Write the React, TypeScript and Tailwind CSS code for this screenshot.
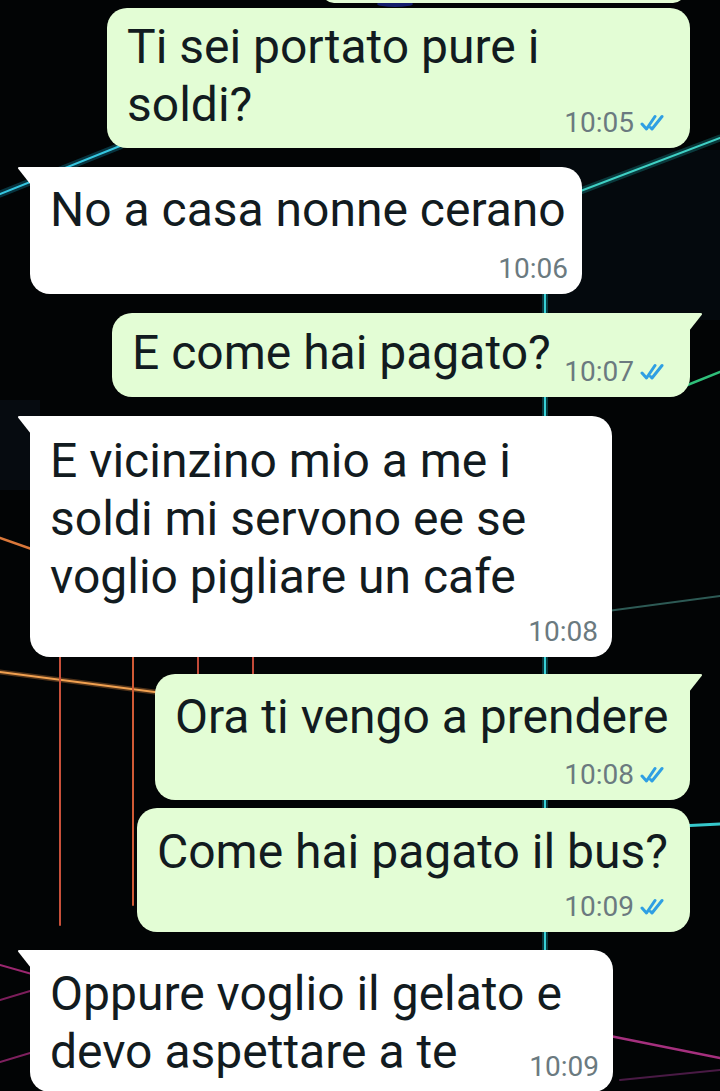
import type { ReactNode } from "react";

const font = { fontFamily: "Roboto, 'Noto Sans', Arial, sans-serif" };

function Ticks() {
  return (
    <svg width="24" height="18" viewBox="0 0 24 18" fill="none" className="shrink-0">
      <path d="M2 10 L6.5 15 L15 2.5" stroke="#2f9fe3" strokeWidth="3" strokeLinecap="round" strokeLinejoin="round" />
      <path d="M10.5 13.5 L12 15 L22 2.5" stroke="#2f9fe3" strokeWidth="3" strokeLinecap="round" strokeLinejoin="round" />
    </svg>
  );
}

function Time({ t, read }: { t: string; read?: boolean }) {
  return (
    <div className="flex shrink-0 items-center gap-[6px] text-[28px] leading-[28px] text-[#6b7a80]">
      <span>{t}</span>
      {read && <Ticks />}
    </div>
  );
}

function TailIn() {
  return (
    <svg width="14" height="18" viewBox="0 0 14 18" className="absolute -left-[13px] top-0">
      <path d="M14 0 H2.6 Q0 0 1.4 2 L14 18 Z" fill="#ffffff" />
    </svg>
  );
}

function TailOut() {
  return (
    <svg width="14" height="18" viewBox="0 0 14 18" className="absolute -right-[13px] top-0">
      <path d="M0 0 H11.4 Q14 0 12.6 2 L0 18 Z" fill="#e3fdd5" />
    </svg>
  );
}

type BubbleProps = {
  out?: boolean;
  tail?: boolean;
  inline?: boolean;
  className: string;
  lines: string[];
  time: string;
};

function Bubble({ out, tail, inline, className, lines, time }: BubbleProps) {
  const text: ReactNode = (
    <p className="whitespace-nowrap text-[48px] leading-[58px] text-[#121b20]">
      {lines.map((l, i) => (
        <span key={i} className="block">
          {l}
        </span>
      ))}
    </p>
  );
  return (
    <div
      className={`relative flex shrink-0 rounded-[20px] pb-[11px] pl-[20px] ${
        out ? "ml-auto mr-[30px] bg-[#e3fdd5] pr-[26px]" : "ml-[30px] bg-white pr-[14px]"
      } ${tail ? (out ? "rounded-tr-none" : "rounded-tl-none") : ""} ${
        inline ? "flex-row items-end justify-between" : "flex-col justify-between"
      } ${className}`}
    >
      {tail && (out ? <TailOut /> : <TailIn />)}
      <div className={inline ? "min-w-0 flex-1 self-start" : ""}>{text}</div>
      <div className="flex justify-end">
        <Time t={time} read={out} />
      </div>
    </div>
  );
}

function Wallpaper() {
  return (
    <svg className="absolute inset-0" width="720" height="1091" viewBox="0 0 720 1091">
      <rect width="720" height="1091" fill="#020405" />
      <rect x="540" y="150" width="180" height="170" fill="#04090d" />
      <rect x="0" y="400" width="40" height="90" fill="#060b10" />
      <g fill="none" strokeLinecap="round">
        <ellipse cx="395" cy="4" rx="18" ry="3" fill="#1b2a9a" opacity="0.7" />
        <path d="M0 194 L120 146" stroke="#17a3c4" strokeWidth="7" opacity="0.3" />
        <path d="M0 194 L120 146" stroke="#35c6e0" strokeWidth="2" />
        <path d="M570 195 L720 138" stroke="#1aa8a8" strokeWidth="7" opacity="0.3" />
        <path d="M570 195 L720 138" stroke="#3fd0c4" strokeWidth="2" />
        <path d="M545 290 L545 1091" stroke="#1bb5c0" strokeWidth="6" opacity="0.3" />
        <path d="M545 290 L545 1091" stroke="#38d0d6" strokeWidth="2" />
        <path d="M680 388 L720 372" stroke="#2fbf7a" strokeWidth="2.5" />
        <path d="M600 612 L720 596" stroke="#2d5a55" strokeWidth="2" />
        <path d="M0 538 L40 552" stroke="#d9773a" strokeWidth="2.5" />
        <path d="M0 672 L170 694" stroke="#e08a40" strokeWidth="5" opacity="0.35" />
        <path d="M0 672 L170 694" stroke="#f0a050" strokeWidth="2" />
        <path d="M60 652 L60 925" stroke="#c8503a" strokeWidth="2" />
        <path d="M133 652 L133 905" stroke="#d05a35" strokeWidth="2" />
        <path d="M198 652 L198 690" stroke="#c24a38" strokeWidth="2" />
        <path d="M253 652 L253 690" stroke="#c24a38" strokeWidth="2" />
        <path d="M680 826 L720 824" stroke="#36c8cc" strokeWidth="3" />
        <path d="M0 965 L60 982" stroke="#c0308a" strokeWidth="2" opacity="0.8" />
        <path d="M0 1000 L50 985" stroke="#b02a80" strokeWidth="2" opacity="0.7" />
        <path d="M0 1062 L40 1050" stroke="#b42c84" strokeWidth="2" opacity="0.7" />
        <path d="M600 1034 L720 1058" stroke="#c23894" strokeWidth="2.5" opacity="0.85" />
        <path d="M620 1080 L720 1070" stroke="#7a2a70" strokeWidth="2" opacity="0.6" />
      </g>
    </svg>
  );
}

export default function App() {
  return (
    <div className="relative h-[1091px] w-[720px] overflow-hidden bg-black" style={font}>
      <Wallpaper />
      <div className="relative flex flex-col">
        <div className="-mt-[21px] ml-[322px] h-[24px] w-[363px] shrink-0 rounded-[20px] bg-[#e3fdd5]" />
        <div className="h-[5px] shrink-0" />
        <Bubble out inline className="h-[140px] w-[583px] pt-[10px]" lines={["Ti sei portato pure i", "soldi?"]} time="10:05" />
        <div className="h-[19px] shrink-0" />
        <Bubble tail className="h-[127px] w-[552px] pt-[14px]" lines={["No a casa nonne cerano"]} time="10:06" />
        <div className="h-[19px] shrink-0" />
        <Bubble out tail inline className="h-[84px] w-[578px] pt-[11px]" lines={["E come hai pagato?"]} time="10:07" />
        <div className="h-[19px] shrink-0" />
        <Bubble
          tail
          className="h-[241px] w-[582px] pt-[16px]"
          lines={["E vicinzino mio a me i", "soldi mi servono ee se", "voglio pigliare un cafe"]}
          time="10:08"
        />
        <div className="h-[17px] shrink-0" />
        <Bubble out tail className="h-[126px] w-[535px] pt-[14px]" lines={["Ora ti vengo a prendere"]} time="10:08" />
        <div className="h-[8px] shrink-0" />
        <Bubble out className="h-[124px] w-[553px] pt-[15px]" lines={["Come hai pagato il bus?"]} time="10:09" />
        <div className="h-[18px] shrink-0" />
        <Bubble
          tail
          inline
          className="h-[142px] w-[583px] pt-[15px]"
          lines={["Oppure voglio il gelato e", "devo aspettare a te"]}
          time="10:09"
        />
      </div>
    </div>
  );
}
